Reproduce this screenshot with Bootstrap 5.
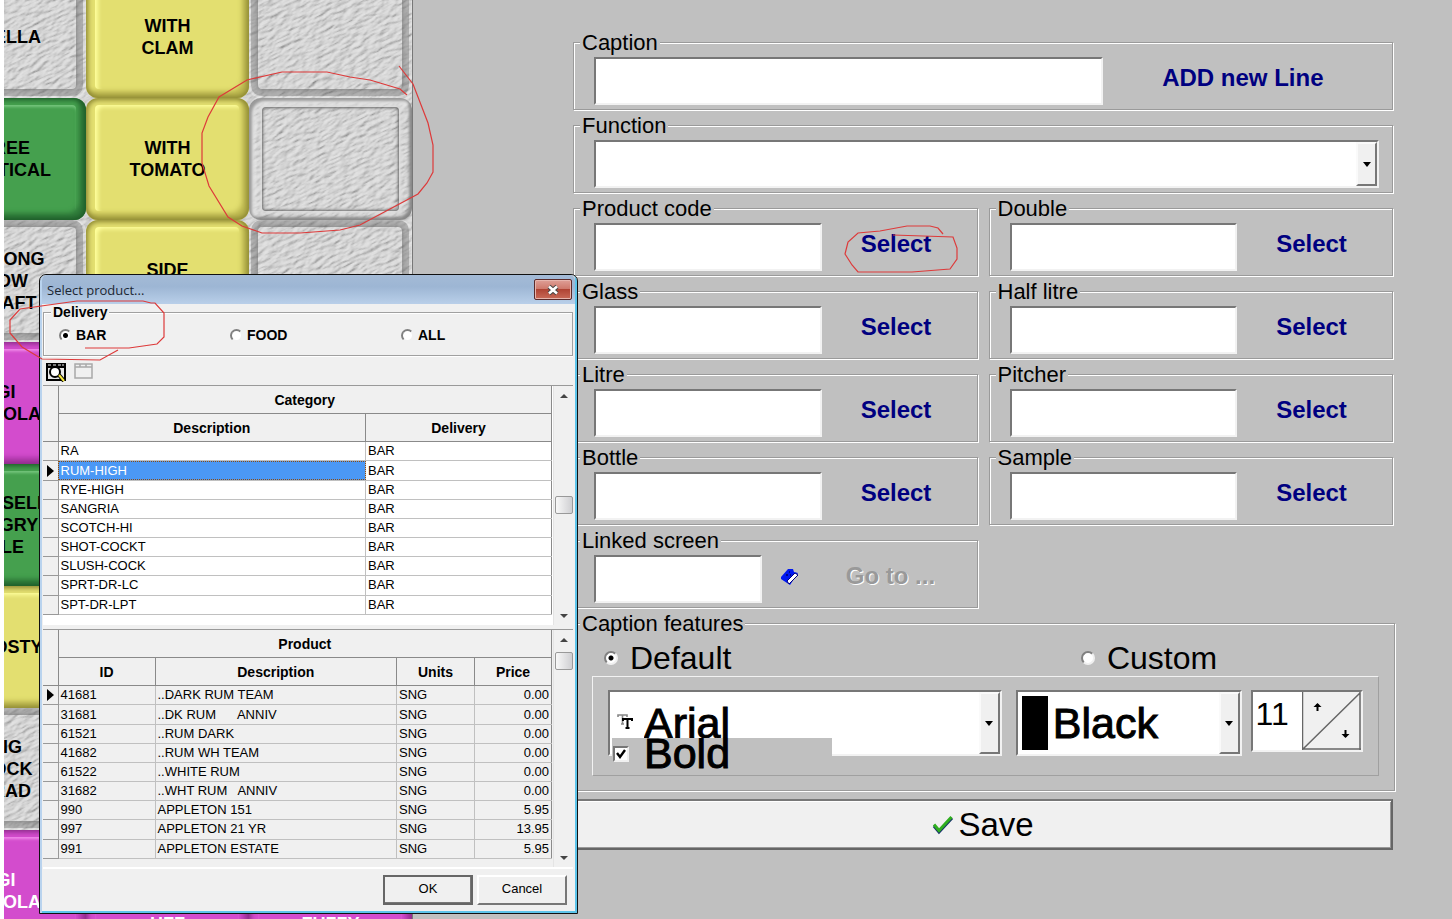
<!DOCTYPE html>
<html lang="en">
<head>
<meta charset="utf-8">
<meta name="viewport" content="width=device-width, initial-scale=1">
<title>Key setup</title>
<link href="https://cdn.jsdelivr.net/npm/bootstrap@5.3.0/dist/css/bootstrap.min.css" rel="stylesheet">
<script src="https://cdn.jsdelivr.net/npm/bootstrap@5.3.0/dist/js/bootstrap.bundle.min.js"></script>
<style>
  body { background: #c0c0c0; color: #000; font-family: "Liberation Sans", Arial, sans-serif; border-left: 4px solid #fff; line-height: 1.2; }
  input, select, button { font-family: inherit; color: inherit; border-radius: 0; }

  /* key deck */
  .deck { width: 409px; flex: none; background: #b9c1c6; border-right: 1px solid #777; }
  .deck-stone { inset: 0; width: 100%; height: 100%; }
  .deck-keys { display: grid; grid-template-columns: repeat(3, 163px); grid-auto-rows: 122px; margin: -24px 0 0 -81px; position: relative; }
  .key { border: 0; border-radius: 12px; font-weight: bold; font-size: 18px; line-height: 22px; padding: 0; position: relative; background: transparent; color: #000; }
  .key:nth-child(3n+1) { padding-left: 3px; }
  .key::before { content: ""; position: absolute; inset: 7px 10px 9px 9px; border-radius: 4px; }
  .key-stone::before { box-shadow: 0 0 0 7px rgba(110,110,110,.4), 0 0 4px 1px rgba(70,70,70,.4); }
  .key-stone { box-shadow: inset 0 0 3px #eee; }
  .key-picked { box-shadow: inset 4px 4px 3px -1px #999, inset -3px -3px 3px #888, inset 6px 6px 4px #e8e8e8; }
  .key-picked::before { inset: 9px 13px 9px 13px; box-shadow: inset 0 0 3px 1px #666, 0 0 3px 2px #ddd; }
  .key-yellow { background: #e3df70; box-shadow: inset 0 0 5px 2px #8b8631, inset -7px -7px 5px #bdb850; }
  .key-yellow::before { box-shadow: inset 4px 3px 4px -1px #ffff9c; }
  .key-green { background: #45a04e; box-shadow: inset 0 0 5px 2px #1d5a28, inset -7px -7px 5px #2f7a3a; }
  .key-green::before { box-shadow: inset 0 3px 3px -1px #76c67e; }
  .key-magenta { background: #d34ccd; box-shadow: inset 0 0 5px 2px #8a2c86, inset -7px -7px 5px #b23aad; }
  .key-magenta::before { box-shadow: inset 0 3px 3px -1px #f08bea; }
  .key span { position: relative; }

  /* form */
  .setup { flex: 1 1 0; margin: 31px 59px 0 160px; min-width: 0; }
  .group { border: 1px solid #9a9a9a; box-shadow: 1px 1px 0 #fff, inset 1px 1px 0 #fff; padding: 4px 6px 4px 20px; margin-bottom: 4px; }
  .group > legend { font-size: 22px; line-height: 24px; height: 22px; margin: 0 0 0 -14px; padding: 0 2px; background: #c0c0c0; }
  .group-wide { padding-right: 9px; }
  .group-full { padding-right: 13px; }
  .pairs { display: grid; grid-template-columns: 1fr 1fr; column-gap: 11px; }
  .sunk { background: #fff; border: 2px solid; border-color: #777 #f2f2f2 #f2f2f2 #777; outline: 0; }
  .entry { height: 48px; min-width: 0; padding: 0; font-size: 22px; }
  .entry-code { flex: 3 1 0; }
  .entry-text { flex: 9 1 0; }
  .entry-link { flex: 9 1 0; }
  .cmd { background: none; border: 0; padding: 0 0 6px; font-weight: bold; font-size: 24px; color: #000080; flex: 2 1 0; white-space: nowrap; }
  .cmd-line { flex: 5 1 0; }
  .cmd-book { flex: 3 1 0; }
  .cmd-goto { flex: 8 1 0; color: #999; text-shadow: 1px 1px 0 #fff; }
  .combo { position: relative; }
  .combo select { width: 100%; height: 100%; appearance: none; padding: 0 30px 0 6px; }
  .combo-arrow { position: absolute; top: 2px; right: 2px; bottom: 2px; width: 21px; background: #f0f0f0; border: 2px solid; border-color: #fafafa #777 #777 #fafafa; display: flex; align-items: center; justify-content: center; pointer-events: none; }
  .combo-arrow::after { content: ""; border: 4px solid transparent; border-top: 5px solid #000; border-bottom: 0; }
  .features { padding: 0 15px 14px 18px; margin-bottom: 8px; margin-right: -2px; }
  .features > legend { margin-left: -12px; }
  .mode { font-size: 32px; line-height: 36px; padding: 6px 0 0 12px; }
  .mode > label { flex: 8 1 0; }
  .mode > label + label { flex: 5 1 0; }
  .dot { appearance: none; width: 14px; height: 14px; border-radius: 50%; margin: 0; background: #fff; border: 2px solid; border-color: #808080 #f0f0f0 #f0f0f0 #808080; flex: none; }
  .dot:checked { background: radial-gradient(circle, #000 2px, #fff 3px); }
  .fontbox { position: relative; border: 1px solid; border-color: #f2f2f2 #a0a0a0 #a0a0a0 #f2f2f2; height: 100px; padding: 13px 15px 0; }
  .combo-font { flex: 396 1 0; height: 66px; }
  .combo-colour { flex: 227 1 0; height: 66px; margin-left: 14px; }
  .combo-font select, .combo-colour select { font-size: 43px; line-height: 50px; padding-left: 34px; -webkit-text-stroke: 1px #000; }
  .combo-colour select { padding-left: 35px; }
  .combo-glyph { position: absolute; left: 9px; top: 24px; }
  .combo-swatch { position: absolute; left: 6px; top: 6px; bottom: 6px; width: 26px; background: #000; }
  .spin { flex: 109 1 0; height: 62px; margin-left: 9px; min-width: 0; }
  .spin input { width: 50px; min-width: 0; flex: 1 1 0; border: 0; padding: 0 0 14px 3px; font-size: 32px; outline: 0; }
  .bold-tick { position: absolute; left: 19px; top: 61px; width: 220px; height: 31px; background: #c0c0c0; overflow: hidden; font-size: 43px; line-height: 31px; -webkit-text-stroke: 1px #000; display: flex; align-items: center; }
  .bold-tick input { appearance: none; width: 16px; height: 16px; margin: 0 15px 0 1px; border: 2px solid; border-color: #777 #f0f0f0 #f0f0f0 #777; background: #fff url("data:image/svg+xml,%3Csvg xmlns='http://www.w3.org/2000/svg' viewBox='0 0 12 12'%3E%3Cpath d='M2 5l3 4 5-7' fill='none' stroke='%23000' stroke-width='2.4'/%3E%3C/svg%3E"); flex: none; }
  .save { width: 100%; height: 51px; background: #f0f0f0; border: 2px solid; border-color: #777 #666 #666 #fff; box-shadow: inset 1px 1px 0 #fff, inset -1px -1px 0 #999; font-size: 33px; line-height: 40px; padding: 0; }

  /* product dialog */
  .dialog { position: absolute; left: 35px; top: 274px; width: 539px; background: #f0f0f0; border: 1px solid #111; border-radius: 7px 7px 0 0; box-shadow: inset 2px 0 0 #b9d3ee, inset -2px -2px 0 #5cc4ea; padding: 0 4px 3px 3px; font-size: 13px; }
  .dialog-bar { height: 29px; margin: 0 -2px 0 -1px; padding: 0 3px 0 5px; background: linear-gradient(#a3bad6, #9db6d4 40%, #b9cfe9); border-radius: 5px 5px 0 0; font: 13px "Open Sans", sans-serif; color: #1c2733; }
  .dialog-close { width: 38px; height: 21px; padding: 0; border: 1px solid #5b2a2a; border-radius: 2px; background: linear-gradient(#dfa097, #cf7a6d 45%, #b04434 50%, #c96a58); box-shadow: inset 0 0 0 1px #e7b5ad; display: flex; align-items: center; justify-content: center; }
  .strong-label { font-size: 14px; font-weight: bold; }
  .delivery { border: 1px solid #a0a0a0; padding: 7px 0 11px 15px; box-shadow: inset 1px 1px 0 #fff, 0 1px 0 #fff; }
  .delivery > legend { font-size: 14px; line-height: 16px; font-weight: bold; background: #f0f0f0; margin: 0 0 0 -8px; padding: 0 2px; }
  .delivery .dot { width: 13px; height: 13px; margin-right: 4px; }
  .tools { height: 29px; padding: 3px 0 0 3px; }
  .tools button { padding: 0; border: 0; background: none; display: block; line-height: 0; }
  .sheet { display: flex; height: 240px; border-top: 1px solid #999; background: #fff; }
  .sheet-grey { background: #f0f0f0; height: 238px; margin-top: 4px; box-shadow: 0 -4px 0 #f0f0f0; }
  .sheet table { flex: 1 1 0; height: 229px; table-layout: fixed; border-collapse: collapse; line-height: 16px; }
  .sheet th { height: 28px; padding: 0; text-align: center; font-size: 14px; background: #f0f0f0; border: 1px solid #8a8a8a; border-top: 0; }
  .sheet td { padding: 0 2px; border: 1px solid #c0c0c0; white-space: pre; overflow: hidden; }
  .sheet td.mark-cell { background: #f0f0f0; border-color: #999; padding: 0 0 0 4px; line-height: 0; }
  .sheet td:last-child, .sheet th:last-child { border-right-color: #8a8a8a; }
  .sheet th:first-child[rowspan], .sheet td.mark-cell { border-left: 0; }
  .picked-cell { background: #4b98f5; color: #fff; outline: 1px dotted #8a4b12; outline-offset: -1px; }
  .here { display: inline-block; border: 6px solid transparent; border-left: 7px solid #000; border-right: 0; }
  .rail { width: 20px; margin-left: 1px; background: #f0f0f0; border-left: 1px solid #e4e4e4; display: flex; flex-direction: column; align-items: center; padding: 8px 0 7px; }
  .rail::before, .rail::after { content: ""; border: 4px solid transparent; }
  .rail::before { border-bottom: 4px solid #444; border-top: 0; }
  .rail::after { border-top: 4px solid #444; border-bottom: 0; margin-top: auto; }
  .thumb { width: 18px; height: 18px; border: 1px solid #999; border-radius: 2px; background: linear-gradient(90deg, #f8f8f8, #cfcfd2); }
  .thumb-mid { margin-top: 98px; }
  .thumb-top { margin-top: 10px; }
  .actions { border-top: 2px solid #fff; padding: 6px 6px 5px 0; }
  .push { width: 90px; height: 30px; padding: 0 0 2px; font-size: 13px; background: #f0f0f0; border: 2px solid; border-color: #fff #777 #777 #fff; }
  .push-main { box-shadow: inset -1px -1px 0 #777; border-color: #666; }

  .ink { position: absolute; left: -4px; top: 0; width: 980px; height: 380px; pointer-events: none; }
</style>
</head>
<body class="vh-100 overflow-hidden">
<div class="d-flex position-relative h-100">

  <div class="deck position-relative overflow-hidden">
    <svg class="deck-stone position-absolute" aria-hidden="true">
      <filter id="stone" x="0" y="0" width="100%" height="100%">
        <feTurbulence type="fractalNoise" baseFrequency="0.09 0.28" numOctaves="3" seed="4"/>
        <feDiffuseLighting surfaceScale="1.8" diffuseConstant="0.95" lighting-color="#e8e8e8"><feDistantLight azimuth="240" elevation="60"/></feDiffuseLighting>
      </filter>
      <rect x="-400" y="-400" width="1500" height="1700" filter="url(#stone)" transform="rotate(-25)"/>
    </svg>
    <div class="deck-keys">
      <button class="key key-stone"><span>STELLA</span></button>
      <button class="key key-yellow"><span>WITH<br>CLAM</span></button>
      <button class="key key-stone" aria-label="Empty"></button>
      <button class="key key-green"><span>FREE<br>VERTICAL</span></button>
      <button class="key key-yellow"><span>WITH<br>TOMATO</span></button>
      <button class="key key-stone key-picked" aria-label="Empty"></button>
      <button class="key key-stone"><span>STRONG<br>BOW<br>DRAFT</span></button>
      <button class="key key-yellow"><span>SIDE<br>&nbsp;</span></button>
      <button class="key key-stone" aria-label="Empty"></button>
      <button class="key key-magenta"><span>GI<br>C-COLA</span></button>
      <button class="key key-magenta" aria-label="Empty"></button>
      <button class="key key-stone" aria-label="Empty"></button>
      <button class="key key-green"><span>RUSSELL<br>ANGRY<br>ALE</span></button>
      <button class="key key-green" aria-label="Empty"></button>
      <button class="key key-stone" aria-label="Empty"></button>
      <button class="key key-yellow"><span>FROSTY</span></button>
      <button class="key key-yellow" aria-label="Empty"></button>
      <button class="key key-stone" aria-label="Empty"></button>
      <button class="key key-stone"><span>BIG<br>ROCK<br>TRAD</span></button>
      <button class="key key-stone" aria-label="Empty"></button>
      <button class="key key-stone" aria-label="Empty"></button>
      <button class="key key-magenta text-white"><span>GI<br>C-COLA</span></button>
      <button class="key key-magenta text-white"><span><br><br>&nbsp;<br>HFF</span></button>
      <button class="key key-magenta text-white"><span><br><br>&nbsp;<br>FUZZY</span></button>
    </div>
  </div>

  <form class="setup">
    <fieldset class="group group-wide">
      <legend class="float-none w-auto">Caption</legend>
      <div class="d-flex">
        <input class="entry entry-text sunk" type="text" aria-label="Caption">
        <button type="button" class="cmd cmd-line">ADD new Line</button>
      </div>
    </fieldset>
    <fieldset class="group group-full">
      <legend class="float-none w-auto">Function</legend>
      <div class="combo entry">
        <select class="sunk" aria-label="Function"><option></option></select>
        <span class="combo-arrow"></span>
      </div>
    </fieldset>
    <div class="pairs">
      <fieldset class="group"><legend class="float-none w-auto">Product code</legend>
        <div class="d-flex"><input class="entry entry-code sunk" type="text" aria-label="Product code"><button type="button" class="cmd">Select</button></div></fieldset>
      <fieldset class="group"><legend class="float-none w-auto">Double</legend>
        <div class="d-flex"><input class="entry entry-code sunk" type="text" aria-label="Double"><button type="button" class="cmd">Select</button></div></fieldset>
      <fieldset class="group"><legend class="float-none w-auto">Glass</legend>
        <div class="d-flex"><input class="entry entry-code sunk" type="text" aria-label="Glass"><button type="button" class="cmd">Select</button></div></fieldset>
      <fieldset class="group"><legend class="float-none w-auto">Half litre</legend>
        <div class="d-flex"><input class="entry entry-code sunk" type="text" aria-label="Half litre"><button type="button" class="cmd">Select</button></div></fieldset>
      <fieldset class="group"><legend class="float-none w-auto">Litre</legend>
        <div class="d-flex"><input class="entry entry-code sunk" type="text" aria-label="Litre"><button type="button" class="cmd">Select</button></div></fieldset>
      <fieldset class="group"><legend class="float-none w-auto">Pitcher</legend>
        <div class="d-flex"><input class="entry entry-code sunk" type="text" aria-label="Pitcher"><button type="button" class="cmd">Select</button></div></fieldset>
      <fieldset class="group"><legend class="float-none w-auto">Bottle</legend>
        <div class="d-flex"><input class="entry entry-code sunk" type="text" aria-label="Bottle"><button type="button" class="cmd">Select</button></div></fieldset>
      <fieldset class="group"><legend class="float-none w-auto">Sample</legend>
        <div class="d-flex"><input class="entry entry-code sunk" type="text" aria-label="Sample"><button type="button" class="cmd">Select</button></div></fieldset>
      <fieldset class="group group-full"><legend class="float-none w-auto">Linked screen</legend>
        <div class="d-flex"><input class="entry entry-link sunk" type="text" aria-label="Linked screen">
          <button type="button" class="cmd cmd-book" aria-label="Open book">
            <svg width="20" height="18" viewBox="0 0 20 18"><path d="M1 9L8 1l5 0 1 3 4 1L10 17 1 11z" fill="#0018f0"/><path d="M7 13L15 5l3 2-9 9z" fill="#fff" stroke="#000080"/><path d="M6 7h2M9 4h1M10 7h1" stroke="#000060" stroke-width="1.4"/></svg>
          </button>
          <button type="button" class="cmd cmd-goto">Go to ...</button></div></fieldset>
    </div>
    <fieldset class="group features">
      <legend class="float-none w-auto">Caption features</legend>
      <div class="mode d-flex">
        <label class="d-flex align-items-center"><input class="dot" type="radio" name="mode" checked><span class="ps-2 ms-1">Default</span></label>
        <label class="d-flex align-items-center"><input class="dot" type="radio" name="mode"><span class="ps-2 ms-1">Custom</span></label>
      </div>
      <div class="fontbox d-flex">
        <div class="combo combo-font">
          <select class="sunk" aria-label="Font"><option>Arial</option></select>
          <svg class="combo-glyph" width="16" height="16" viewBox="0 0 16 16"><path d="M1 3V1h9v2M5.500 1v9M4 10h3" fill="none" stroke="#888" stroke-width="1.600"/><path d="M6 7V5h9v2M10.500 5v9M8.500 14h4" fill="none" stroke="#000" stroke-width="2"/></svg>
          <span class="combo-arrow"></span>
        </div>
        <div class="combo combo-colour">
          <select class="sunk" aria-label="Colour"><option>Black</option></select>
          <span class="combo-swatch"></span><span class="combo-arrow"></span>
        </div>
        <div class="spin sunk d-flex">
          <input type="text" value="11" aria-label="Size">
          <svg width="59" height="58" viewBox="0 0 59 58"><rect width="59" height="58" fill="#f0f0f0"/><path d="M0.500 0v58M0 57h59M58 0v58M1 57L58 1" fill="none" stroke="#666" stroke-width="1.500"/><path d="M15.500 19v-7M43.500 38v7" stroke="#000" stroke-width="2"/><path d="M11.500 15l4-4 4 4zM39.500 42l4 4 4-4z"/></svg>
        </div>
        <label class="bold-tick"><input type="checkbox" checked>Bold</label>
      </div>
    </fieldset>
    <button type="button" class="save d-flex align-items-center justify-content-center">
      <svg width="22" height="20" viewBox="0 0 22 20" class="me-1"><path d="M2 11l5 6L20 3" fill="none" stroke="#16306a" stroke-width="3"/><path d="M2 9.500l5 6L19.500 2" fill="none" stroke="#2fae1f" stroke-width="3"/></svg>
      Save
    </button>
  </form>

  <section class="dialog" role="dialog" aria-label="Select product">
    <div class="dialog-bar d-flex align-items-center justify-content-between">
      <span>Select product...</span>
      <button class="dialog-close" aria-label="Close"><svg width="14" height="12" viewBox="0 0 14 12"><path d="M3 2.500l8 7M11 2.500l-8 7" stroke="#444" stroke-width="4.500"/><path d="M3 2.500l8 7M11 2.500l-8 7" stroke="#fff" stroke-width="2.600"/></svg></button>
    </div>
    <fieldset class="delivery">
      <legend class="float-none w-auto">Delivery</legend>
      <div class="row g-0 strong-label">
        <label class="col-4 d-flex align-items-center"><input class="dot" type="radio" name="del" checked>BAR</label>
        <label class="col-4 d-flex align-items-center"><input class="dot" type="radio" name="del">FOOD</label>
        <label class="col-4 d-flex align-items-center"><input class="dot" type="radio" name="del">ALL</label>
      </div>
    </fieldset>
    <div class="tools d-flex gap-2">
      <button aria-label="Find"><svg width="20" height="20" viewBox="0 0 20 20"><path d="M0 1h20v18H0z" fill="#000"/><path d="M2 2h3v2H2zM7 2h3v2H7zM12 2h3v2h-3zM16 2h2v2h-2z" fill="#777"/><path d="M2 6h16v11H2z" fill="#e8e8e8"/><circle cx="9" cy="10" r="5" fill="#fff" stroke="#000" stroke-width="2"/><path d="M13 13l5 6" stroke="#000" stroke-width="4"/><path d="M13 13l5 6" stroke="#f5e83c" stroke-width="2"/></svg></button>
      <button aria-label="Grid" disabled><svg width="20" height="20" viewBox="0 0 20 20"><path d="M1 2h17v14H1zM1 5h17M6 2v3M12 2v3" fill="none" stroke="#a8a8a8" stroke-width="1.500"/></svg></button>
    </div>

    <div class="sheet">
      <table>
        <colgroup><col style="width:15px"><col><col style="width:186px"></colgroup>
        <thead><tr><th rowspan="2"></th><th colspan="2">Category</th></tr><tr><th>Description</th><th>Delivery</th></tr></thead>
        <tbody>
          <tr><td class="mark-cell"></td><td>RA</td><td>BAR</td></tr>
          <tr><td class="mark-cell"><i class="here"></i></td><td class="picked-cell">RUM-HIGH</td><td>BAR</td></tr>
          <tr><td class="mark-cell"></td><td>RYE-HIGH</td><td>BAR</td></tr>
          <tr><td class="mark-cell"></td><td>SANGRIA</td><td>BAR</td></tr>
          <tr><td class="mark-cell"></td><td>SCOTCH-HI</td><td>BAR</td></tr>
          <tr><td class="mark-cell"></td><td>SHOT-COCKT</td><td>BAR</td></tr>
          <tr><td class="mark-cell"></td><td>SLUSH-COCK</td><td>BAR</td></tr>
          <tr><td class="mark-cell"></td><td>SPRT-DR-LC</td><td>BAR</td></tr>
          <tr><td class="mark-cell"></td><td>SPT-DR-LPT</td><td>BAR</td></tr>
        </tbody>
      </table>
      <div class="rail"><span class="thumb thumb-mid"></span></div>
    </div>

    <div class="sheet sheet-grey">
      <table>
        <colgroup><col style="width:15px"><col style="width:97px"><col><col style="width:78px"><col style="width:77px"></colgroup>
        <thead><tr><th rowspan="2"></th><th colspan="4">Product</th></tr><tr><th>ID</th><th>Description</th><th>Units</th><th>Price</th></tr></thead>
        <tbody>
          <tr><td class="mark-cell"><i class="here"></i></td><td>41681</td><td>..DARK RUM TEAM</td><td>SNG</td><td class="text-end">0.00</td></tr>
          <tr><td class="mark-cell"></td><td>31681</td><td>..DK RUM      ANNIV</td><td>SNG</td><td class="text-end">0.00</td></tr>
          <tr><td class="mark-cell"></td><td>61521</td><td>..RUM DARK</td><td>SNG</td><td class="text-end">0.00</td></tr>
          <tr><td class="mark-cell"></td><td>41682</td><td>..RUM WH TEAM</td><td>SNG</td><td class="text-end">0.00</td></tr>
          <tr><td class="mark-cell"></td><td>61522</td><td>..WHITE RUM</td><td>SNG</td><td class="text-end">0.00</td></tr>
          <tr><td class="mark-cell"></td><td>31682</td><td>..WHT RUM   ANNIV</td><td>SNG</td><td class="text-end">0.00</td></tr>
          <tr><td class="mark-cell"></td><td>990</td><td>APPLETON 151</td><td>SNG</td><td class="text-end">5.95</td></tr>
          <tr><td class="mark-cell"></td><td>997</td><td>APPLETON 21 YR</td><td>SNG</td><td class="text-end">13.95</td></tr>
          <tr><td class="mark-cell"></td><td>991</td><td>APPLETON ESTATE</td><td>SNG</td><td class="text-end">5.95</td></tr>
        </tbody>
      </table>
      <div class="rail"><span class="thumb thumb-top"></span></div>
    </div>

    <div class="actions d-flex justify-content-end gap-1">
      <button class="push push-main">OK</button>
      <button class="push">Cancel</button>
    </div>
  </section>

  <svg class="ink" viewBox="0 0 980 380" fill="none" stroke="#dd3a3a" stroke-width="1.200" aria-hidden="true">
    <path d="M407 95L400 89 370 80 350 77 327 72H282L247 80 219 97 208 117 202 133V163L209 186 228 217 242 226 262 233H300L340 230 360 225 418 194 427 183 433 172V145L428 123 413 84 399 66"/>
    <path d="M943 234L938 228 930 226H907L880 231 858 233 848 242 845 254 852 265 858 272H912L950 269 957 259V248L953 237 923 236 893 235"/>
    <path d="M85 348H129L157 344 164 337V313L155 303 151 303 143 301H77L20 309 10 320V333L22 347 42 359 100 360 118 350"/>
  </svg>
</div>
</body>
</html>
